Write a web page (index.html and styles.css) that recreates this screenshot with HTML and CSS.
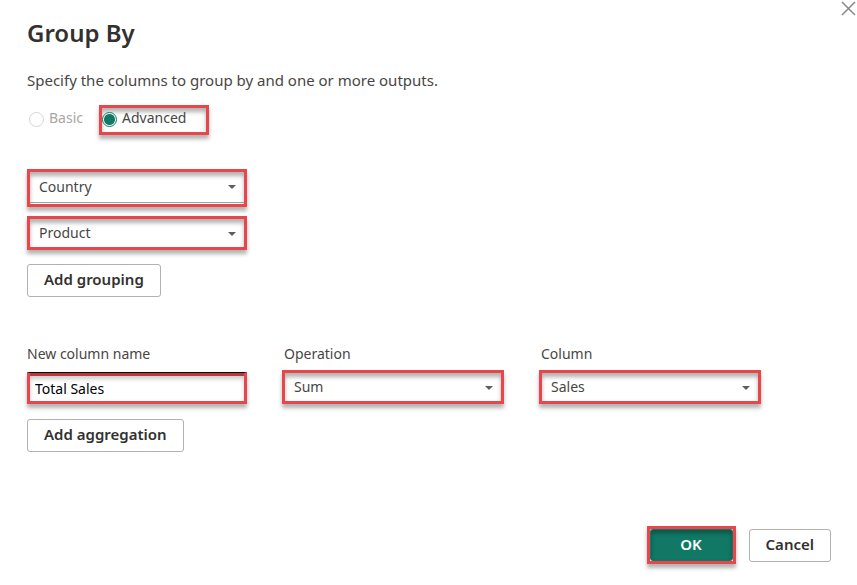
FILE: index.html
```html
<!DOCTYPE html>
<html lang="en">
  <head>
    <meta charset="utf-8">
    <meta name="viewport" content="width=device-width,initial-scale=1.0">
    <title>Group By</title>
    <link rel="stylesheet" href="styles.css">
  </head>
  <body>
    <form class="dialog">
      <button type="button" class="close" aria-label="Close">
        <svg width="15" height="15" viewBox="0 0 15 15"><path d="M1 1l13 13M14 1L1 14" /></svg>
      </button>
      <h1>Group By</h1>
      <p class="intro">Specify the columns to group by and one or more outputs.</p>

      <div class="modes">
        <label class="mode muted"><input type="radio" name="mode">Basic</label>
        <label class="mode highlight"><input type="radio" name="mode" checked>Advanced</label>
      </div>

      <!-- columns to group on -->
      <div class="groupings">
        <div class="picker highlight tall">
          <select aria-label="First grouping column"><option>Country</option></select>
          <svg class="arrow" width="8" height="4" viewBox="0 0 8 4"><path d="M0 0h8L4 4z" /></svg>
        </div>
        <div class="picker highlight">
          <select aria-label="Second grouping column"><option>Product</option></select>
          <svg class="arrow" width="8" height="4" viewBox="0 0 8 4"><path d="M0 0h8L4 4z" /></svg>
        </div>
      </div>
      <button type="button" class="btn">Add grouping</button>

      <!-- aggregations -->
      <div class="aggregations">
        <div class="field">
          <label for="new-name">New column name</label>
          <div class="highlight focused">
            <input id="new-name" class="name-input" type="text" value="Total Sales" autocomplete="off">
          </div>
        </div>
        <div class="field">
          <label for="operation">Operation</label>
          <div class="picker highlight">
            <select id="operation"><option>Sum</option></select>
            <svg class="arrow" width="8" height="4" viewBox="0 0 8 4"><path d="M0 0h8L4 4z" /></svg>
          </div>
        </div>
        <div class="field">
          <label for="column">Column</label>
          <div class="picker highlight">
            <select id="column"><option>Sales</option></select>
            <svg class="arrow" width="8" height="4" viewBox="0 0 8 4"><path d="M0 0h8L4 4z" /></svg>
          </div>
        </div>
      </div>
      <button type="button" class="btn">Add aggregation</button>

      <div class="actions">
        <div class="highlight ok-frame"><button type="submit" class="btn primary">OK</button></div>
        <button type="button" class="btn">Cancel</button>
      </div>
    </form>
  </body>
</html>
```
FILE: styles.css
```css
* { box-sizing: border-box; }
body { margin: 0; background: #fff; color: #484644; font: 14px/20px "Segoe UI", "Noto Sans", "Open Sans", sans-serif; }
input, select, button { font: inherit; }

.dialog { position: relative; padding: 17px 26px 20px 27px; }
.close { position: absolute; top: 0; right: 0; width: 16px; height: 16px; padding: 0; border: none; background: none; }
.close svg { display: block; fill: none; stroke: #8a8886; stroke-width: 1.5; }

h1 { margin: 0; font-size: 24px; line-height: 32px; font-weight: 600; color: #323130; }
.intro { margin: 21px 0 15px; font-size: 15px; }

/* red call-out frame */
.highlight { border: 3px solid #e8464b; box-shadow: 0 4px 4px rgba(0, 0, 0, 0.3), inset 0 4px 4px rgba(0, 0, 0, 0.3); }

.modes { display: flex; align-items: center; gap: 16px; }
.mode { display: flex; align-items: center; gap: 5px; height: 30px; padding-bottom: 5px; }
.mode.highlight { width: 110px; }
.muted { color: #a8a6a4; }
.mode input { appearance: none; width: 15px; height: 15px; margin: 3px 0 0 2px; border: 1px solid #d8d6d4; border-radius: 50%; background: #fff; }
.mode input:checked { margin-left: 0; border-color: #117865; background: radial-gradient(circle, #117865 5px, #fff 6px); }

.groupings { display: grid; gap: 9px; max-width: 220px; margin: 34px 0 14px; }
.picker { position: relative; height: 34px; }
.picker.tall { height: 38px; }
.picker.tall select { height: 31px; border-bottom: 1px solid #a19f9d; }
.picker select { display: block; width: 100%; height: 28px; padding: 0 8px 0 9px; border: none; background: none; color: #484644; appearance: none; }
.arrow { position: absolute; top: 13px; right: 8px; fill: #605e5c; pointer-events: none; }

.aggregations { display: grid; grid-template-columns: repeat(3, minmax(0, 220px)); gap: 37px; margin: 47px 0 15px; }
.field label { display: block; margin-bottom: 6px; }
.field .picker { margin-left: -2px; }
.focused { height: 32px; margin-top: 8px; border-top: 1px solid #000; background: linear-gradient(#e8464b, #e8464b) top / 100% 3px no-repeat; box-shadow: 0 4px 4px rgba(0, 0, 0, 0.3), inset 0 6px 4px rgba(0, 0, 0, 0.2); }
.name-input { display: block; width: 100%; height: 28px; padding: 3px 5px 0; border: none; background: none; color: #000; }

.btn { height: 33px; padding: 0 16px 3px; border: 1px solid #b3b0ad; border-radius: 3px; background: #fff; color: #323130; font-size: 15px; font-weight: 600; }
.primary { display: block; width: 100%; height: 32px; border-color: #117865; background: #117865; color: #fff; box-shadow: inset 0 3px 4px rgba(0, 0, 0, 0.3); }
.actions { display: flex; justify-content: flex-end; align-items: center; gap: 13px; margin-top: 74px; }
.ok-frame { width: 89px; }
```
